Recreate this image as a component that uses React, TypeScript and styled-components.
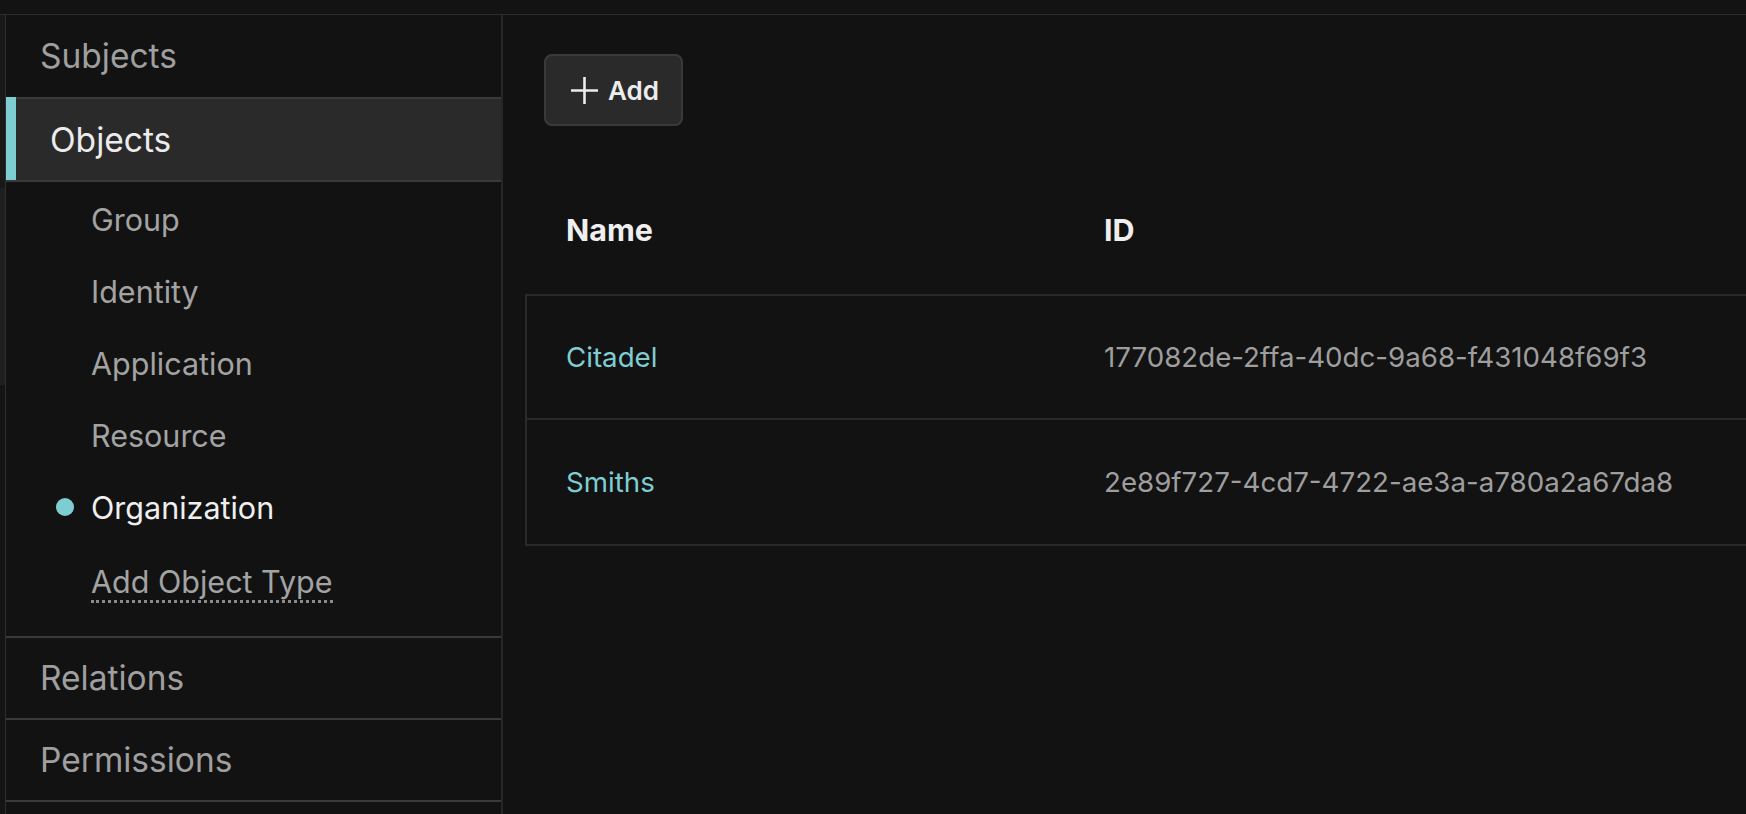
import React from "react";
import styled, { createGlobalStyle } from "styled-components";

const Global = createGlobalStyle`
  html, body { margin: 0; padding: 0; background: #121212; }
  body { font-family: Inter, "Noto Sans", "Liberation Sans", sans-serif; overflow: hidden; }
  * { box-sizing: border-box; }
`;

const Page = styled.div`
  width: 1746px;
  height: 814px;
  display: flex;
  flex-direction: column;
  background: #121212;
  overflow: hidden;
`;

const TopBar = styled.div`
  height: 15px;
  flex: none;
  background: #131313;
  border-bottom: 1px solid #2c2c2c;
`;

const Body = styled.div`
  flex: 1;
  display: flex;
  min-height: 0;
`;

const EdgeStrip = styled.div`
  width: 5px;
  flex: none;
  display: flex;
  flex-direction: column;
`;

const EdgePart = styled.div<{ $h: number; $c: string }>`
  height: ${(p) => p.$h}px;
  background: ${(p) => p.$c};
  flex: none;
`;

const Sidebar = styled.nav`
  width: 498px;
  flex: none;
  border-left: 1px solid #2e2e2e;
  border-right: 2px solid #262626;
  display: flex;
  flex-direction: column;
  background: #121212;
`;

const Section = styled.div<{ $active?: boolean; $h: number }>`
  position: relative;
  height: ${(p) => p.$h}px;
  flex: none;
  display: flex;
  align-items: center;
  padding-left: ${(p) => (p.$active ? 44 : 34)}px;
  font-size: 33.5px;
  color: ${(p) => (p.$active ? "#ececec" : "#9f9f9f")};
  background: ${(p) => (p.$active ? "#2a2a2a" : "transparent")};
  border-bottom: 2px solid #3a3a3a;
`;

const Accent = styled.span`
  position: absolute;
  left: 0;
  top: -2px;
  bottom: 0;
  width: 10px;
  background: #7ecdd2;
`;

const SubList = styled.div`
  flex: none;
  display: flex;
  flex-direction: column;
  padding: 1px 0 21px;
  border-bottom: 2px solid #3a3a3a;
`;

const SubItem = styled.div<{ $active?: boolean }>`
  height: 72px;
  display: flex;
  align-items: center;
  padding-left: 50px;
  gap: 17px;
  font-size: 30.5px;
  color: ${(p) => (p.$active ? "#efefef" : "#a3a3a3")};
`;

const Dot = styled.span<{ $show?: boolean }>`
  width: 18px;
  height: 18px;
  border-radius: 50%;
  flex: none;
  background: ${(p) => (p.$show ? "#7ecdd2" : "transparent")};
`;

const DottedLink = styled.span`
  border-bottom: 3px dotted #8a8a8a;
  padding-bottom: 3px;
  line-height: 1;
  margin-top: 12px;
`;

const Main = styled.main`
  flex: 1;
  min-width: 0;
  overflow: hidden;
  padding: 39px 0 0 22px;
  display: flex;
  flex-direction: column;
`;

const AddButton = styled.button`
  margin-left: 19px;
  width: 139px;
  height: 72px;
  display: flex;
  align-items: center;
  justify-content: center;
  gap: 9px;
  padding: 0 0 0 2px;
  background: #2a2a2a;
  border: 2px solid #3a3a3a;
  border-radius: 8px;
  color: #ececec;
  font-family: Inter, "Noto Sans", sans-serif;
  font-size: 26px;
  font-weight: 600;
`;

const Table = styled.div`
  margin-top: 42px;
  width: 1400px;
  display: flex;
  flex-direction: column;
`;

const HeadRow = styled.div`
  height: 126px;
  display: grid;
  grid-template-columns: 538px 1fr;
  align-items: center;
  padding-bottom: 4px;
  border-left: 2px solid transparent;
`;

const HeadCell = styled.div`
  padding-left: 39px;
  font-size: 30.5px;
  font-weight: 700;
  color: #efefef;
`;

const Row = styled.div`
  height: 126px;
  display: grid;
  grid-template-columns: 538px 1fr;
  align-items: center;
  border: 2px solid #2a2a2a;
  border-right: none;
  & + & {
    border-top: none;
  }
`;

const NameCell = styled.div`
  padding-left: 39px;
  font-size: 27.7px;
  color: #7ecdd2;
`;

const IdCell = styled.div`
  padding-left: 39px;
  font-size: 27.7px;
  color: #9e9e9e;
`;

const PlusIcon = () => (
  <svg width="29" height="29" viewBox="0 0 29 29" fill="none">
    <path d="M14.5 1v27M1 14.5h27" stroke="#ececec" strokeWidth="2.6" />
  </svg>
);

const subItems = ["Group", "Identity", "Application", "Resource", "Organization"];

const rows = [
  { name: "Citadel", id: "177082de-2ffa-40dc-9a68-f431048f69f3" },
  { name: "Smiths", id: "2e89f727-4cd7-4722-ae3a-a780a2a67da8" },
];

export default function App() {
  return (
    <Page>
      <Global />
      <TopBar />
      <Body>
        <EdgeStrip>
          <EdgePart $h={173} $c="#181818" />
          <EdgePart $h={197} $c="#1f1f1f" />
          <EdgePart $h={430} $c="#141414" />
        </EdgeStrip>
        <Sidebar>
          <Section $h={84}>Subjects</Section>
          <Section $active $h={83}>
            <Accent />
            Objects
          </Section>
          <SubList>
            {subItems.map((s) => (
              <SubItem key={s} $active={s === "Organization"}>
                <Dot $show={s === "Organization"} />
                {s}
              </SubItem>
            ))}
            <SubItem>
              <Dot />
              <DottedLink>Add Object Type</DottedLink>
            </SubItem>
          </SubList>
          <Section $h={82}>Relations</Section>
          <Section $h={82}>Permissions</Section>
          <Section $h={82} />
        </Sidebar>
        <Main>
          <div>
            <AddButton>
              <PlusIcon />
              Add
            </AddButton>
          </div>
          <Table>
            <HeadRow>
              <HeadCell>Name</HeadCell>
              <HeadCell>ID</HeadCell>
            </HeadRow>
            {rows.map((r) => (
              <Row key={r.id}>
                <NameCell>{r.name}</NameCell>
                <IdCell>{r.id}</IdCell>
              </Row>
            ))}
          </Table>
        </Main>
      </Body>
    </Page>
  );
}
